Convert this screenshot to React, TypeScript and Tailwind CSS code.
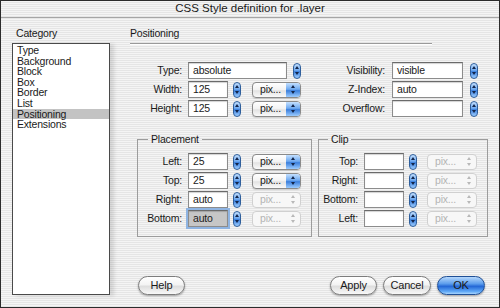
import type { ReactNode } from 'react';

// Aqua-era "CSS Style definition" dialog

const categories = [
  'Type',
  'Background',
  'Block',
  'Box',
  'Border',
  'List',
  'Positioning',
  'Extensions',
];

function Arrows({ color = '#13254a' }: { color?: string }) {
  return (
    <svg width="4" height="9" viewBox="0 0 4 9" className="shrink-0">
      <path d="M2 0 L4 3 L0 3 Z M0 6 L4 6 L2 9 Z" fill={color} />
    </svg>
  );
}

function Stepper({ className = '' }: { className?: string }) {
  return (
    <div
      className={
        'flex h-[16px] w-[8px] shrink-0 items-center justify-center rounded-[4px] border border-[#2f5f9c] bg-[linear-gradient(180deg,#c4e0ff_0%,#6ea9f0_45%,#3b7fdc_55%,#9cccff_100%)] ' +
        className
      }
    >
      <Arrows />
    </div>
  );
}

function PixSelect({ disabled, className = '' }: { disabled?: boolean; className?: string }) {
  if (disabled) {
    return (
      <div
        className={
          'flex h-[16px] shrink-0 items-center rounded-[4px] border border-[#d0d0d0] bg-[#f7f7f7] text-[#b4b4b4] ' +
          className
        }
      >
        <span className="flex-1 pl-[7px] leading-none">pix...</span>
        <div className="flex h-full w-[14px] items-center justify-center">
          <Arrows color="#b8b8b8" />
        </div>
      </div>
    );
  }
  return (
    <div
      className={
        'flex h-[16px] shrink-0 items-center overflow-hidden rounded-[4px] border border-[#8a8a8a] bg-[linear-gradient(180deg,#ffffff_0%,#f2f2f2_50%,#e2e2e2_55%,#fafafa_100%)] shadow-[0_1px_1px_rgba(0,0,0,0.15)] ' +
        className
      }
    >
      <span className="flex-1 pl-[7px] leading-none">pix...</span>
      <div className="flex h-full w-[14px] items-center justify-center bg-[linear-gradient(180deg,#c4e0ff_0%,#6ea9f0_45%,#3b7fdc_55%,#9cccff_100%)]">
        <Arrows />
      </div>
    </div>
  );
}

function Field({
  value = '',
  focused,
  className = '',
}: {
  value?: string;
  focused?: boolean;
  className?: string;
}) {
  return (
    <div
      className={
        (focused
          ? 'bg-[#c6c6c6] ring-2 ring-[#8fb4e2] '
          : 'bg-white ') +
        'flex h-[17px] shrink-0 items-center border border-[#8c8c8c] border-t-[#6a6a6a] pl-[4px] leading-none shadow-[inset_0_1px_1px_rgba(0,0,0,0.18)] ' +
        className
      }
    >
      {value}
    </div>
  );
}

function Label({ children, className = '' }: { children: ReactNode; className?: string }) {
  return <span className={'shrink-0 text-right leading-none ' + className}>{children}</span>;
}

function AquaButton({
  children,
  primary,
  className = '',
}: {
  children: ReactNode;
  primary?: boolean;
  className?: string;
}) {
  return (
    <button
      className={
        (primary
          ? 'border-[#1f4f96] bg-[linear-gradient(180deg,#b6d8fc_0%,#5b9cec_40%,#2467d6_55%,#5fa8f6_85%,#a6d4ff_100%)] '
          : 'border-[#7c7c7c] bg-[linear-gradient(180deg,#ffffff_0%,#f3f3f3_45%,#dedede_55%,#f8f8f8_100%)] ') +
        'flex h-[19px] items-center justify-center rounded-full border text-[11px] leading-none shadow-[0_1px_2px_rgba(0,0,0,0.35)] ' +
        className
      }
    >
      {children}
    </button>
  );
}

export default function App() {
  return (
    <div className="h-[308px] w-[500px] overflow-hidden border border-[#2b2b2b] bg-[image:repeating-linear-gradient(180deg,#f4f4f4_0px,#f4f4f4_1px,#e5e5e5_1px,#e5e5e5_2px)] font-['Liberation_Sans',Arial,sans-serif] text-[10.5px] tracking-[-0.2px] text-[#1a1a1a]">
      {/* Title bar */}
      <div className="flex h-[17px] items-center justify-center border-b border-[#a5a5a5] text-[11.5px] tracking-normal">
        CSS Style definition for .layer
      </div>

      <div className="flex pt-[9px]">
        {/* Category list */}
        <div className="ml-[11px] flex w-[98px] flex-col">
          <div className="h-[13px] pl-[4px] leading-[13px]">Category</div>
          <ul className="mt-[3px] h-[252px] border border-[#4a4a4a] bg-white pt-px shadow-[4px_1px_4px_rgba(0,0,0,0.12)]">
            {categories.map(c => (
              <li
                key={c}
                className={
                  c === 'Positioning'
                    ? 'bg-[#c3c3c3] pl-[4px] leading-[10.6px]'
                    : 'pl-[4px] leading-[10.6px]'
                }
              >
                {c}
              </li>
            ))}
          </ul>
        </div>

        {/* Positioning panel */}
        <div className="ml-[20px] flex w-[358px] flex-col">
          <div className="h-[13px] leading-[13px]">Positioning</div>
          <div className="mt-[3px] h-[2px] w-[302px] border-t border-b border-t-[#9a9a9a] border-b-white" />

          <div className="mt-[17px] flex flex-col gap-[2px]">
            <div className="flex h-[17px] items-center">
              <Label className="w-[52px]">Type:</Label>
              <div className="ml-[6px] flex w-[113px] items-center">
                <Field value="absolute" className="w-[99px]" />
                <Stepper className="ml-[6px]" />
              </div>
              <Label className="w-[84px]">Visibility:</Label>
              <Field value="visible" className="ml-[7px] w-[71px]" />
              <Stepper className="ml-[7px]" />
            </div>
            <div className="flex h-[17px] items-center">
              <Label className="w-[52px]">Width:</Label>
              <div className="ml-[6px] flex w-[113px] items-center">
                <Field value="125" className="w-[40px]" />
                <Stepper className="ml-[5px]" />
                <PixSelect className="ml-[11px] w-[49px]" />
              </div>
              <Label className="w-[84px]">Z-Index:</Label>
              <Field value="auto" className="ml-[7px] w-[71px]" />
              <Stepper className="ml-[7px]" />
            </div>
            <div className="flex h-[17px] items-center">
              <Label className="w-[52px]">Height:</Label>
              <div className="ml-[6px] flex w-[113px] items-center">
                <Field value="125" className="w-[40px]" />
                <Stepper className="ml-[5px]" />
                <PixSelect className="ml-[11px] w-[49px]" />
              </div>
              <Label className="w-[84px]">Overflow:</Label>
              <Field className="ml-[7px] w-[71px]" />
              <Stepper className="ml-[7px]" />
            </div>
          </div>

          <div className="mt-[16px] ml-[7px] flex gap-[6px]">
            <fieldset className="w-[175px] border border-[#9c9c9c] pb-[9px]">
              <legend className="ml-[10px] px-[3px] leading-[13px]">Placement</legend>
              <div className="flex flex-col gap-[2px] pt-[7px]">
                {[
                  ['Left:', '25', false, false],
                  ['Top:', '25', false, false],
                  ['Right:', 'auto', false, true],
                  ['Bottom:', 'auto', true, true],
                ].map(([label, value, focused, disabled]) => (
                  <div key={label as string} className="flex h-[17px] items-center">
                    <Label className="w-[44px]">{label as string}</Label>
                    <Field
                      value={value as string}
                      focused={focused as boolean}
                      className="ml-[6px] w-[40px]"
                    />
                    <Stepper className="ml-[5px]" />
                    <PixSelect disabled={disabled as boolean} className="ml-[11px] w-[49px]" />
                  </div>
                ))}
              </div>
            </fieldset>

            <fieldset className="w-[170px] border border-[#9c9c9c] pb-[9px]">
              <legend className="ml-[9px] px-[3px] leading-[13px]">Clip</legend>
              <div className="flex flex-col gap-[2px] pt-[7px]">
                {['Top:', 'Right:', 'Bottom:', 'Left:'].map(label => (
                  <div key={label} className="flex h-[17px] items-center">
                    <Label className="w-[39px]">{label}</Label>
                    <Field className="ml-[6px] w-[40px]" />
                    <Stepper className="ml-[5px]" />
                    <PixSelect disabled className="ml-[10px] w-[50px]" />
                  </div>
                ))}
              </div>
            </fieldset>
          </div>

          <div className="mt-[39px] flex items-center justify-between">
            <AquaButton className="ml-[8px] w-[47px]">Help</AquaButton>
            <div className="mr-[3px] flex gap-[6px]">
              <AquaButton className="w-[47px]">Apply</AquaButton>
              <AquaButton className="w-[48px]">Cancel</AquaButton>
              <AquaButton primary className="w-[48px]">
                OK
              </AquaButton>
            </div>
          </div>
        </div>
      </div>
    </div>
  );
}
